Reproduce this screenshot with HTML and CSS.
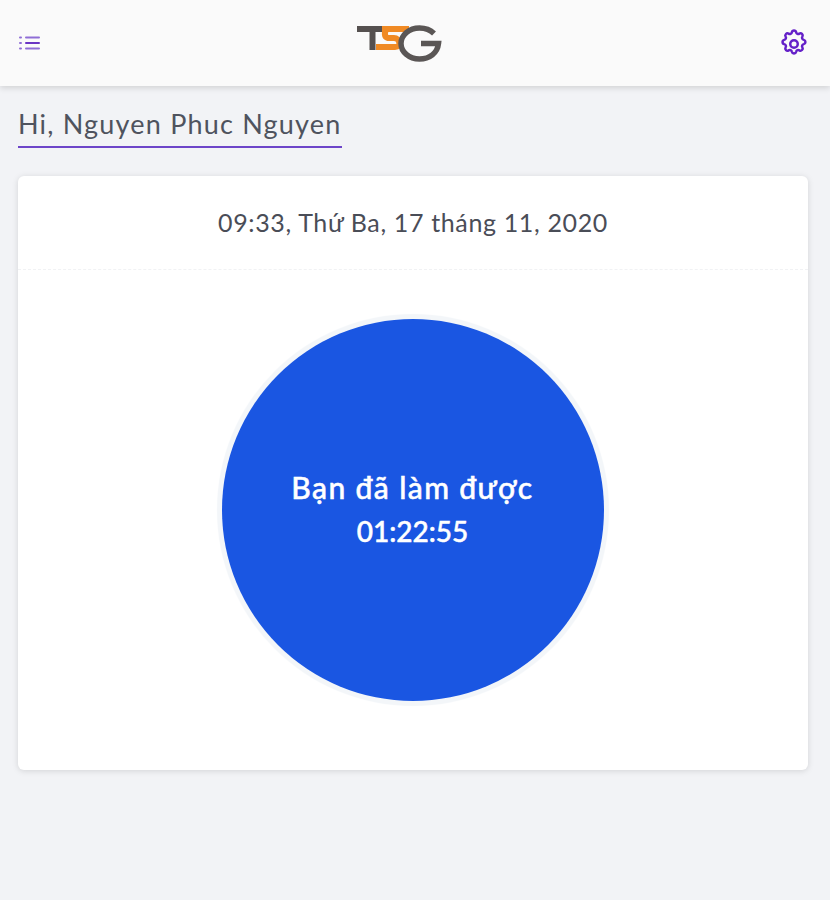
FILE: index.html
```html
<!DOCTYPE html>
<html lang="vi">
<head>
  <meta charset="UTF-8" />
  <meta name="viewport" content="width=device-width, initial-scale=1.0"/>
  <title>TSG</title>
  <link rel="stylesheet" href="styles.css">
</head>
<body>
  <header class="topbar">
    <svg class="menu-icon" viewBox="0 0 21 14" width="21" height="14" aria-hidden="true">
      <path d="M7 1.500h13M7 12.500h13" fill="none" stroke="#8f6ed6" stroke-width="2" stroke-linecap="round"/>
      <path d="M7 7h13" fill="none" stroke="#6a35c4" stroke-width="2" stroke-linecap="round"/>
      <path d="M1 1.500h1M1 7h1M1 12.500h1" fill="none" stroke="#8f6ed6" stroke-width="2" stroke-linecap="round"/>
    </svg>

    <svg class="logo" viewBox="0 0 86 40" width="86" height="40" role="img" aria-label="TSG">
      <path d="M25 5h27M30 5c-3 3-3 8 1 9h6c6 0 8 9 1 9H19" fill="none" stroke="#f08a24" stroke-width="6"/>
      <path d="M0 5h25M15.500 5v21" fill="none" stroke="#55504f" stroke-width="6"/>
      <path d="M77 9.500C73 5.500 68 4 62.500 4 52 4 44 11 44 19.500S52 35 62.500 35c10 0 18-6 19-15.500H64" fill="none" stroke="#5a5655" stroke-width="5.500"/>
    </svg>

    <svg class="gear-icon" viewBox="0 0 24 24" width="30" height="30" aria-hidden="true">
      <path d="M10.300 2.600c.4-1.800 3-1.800 3.400 0a1.700 1.700 0 0 0 2.600 1.100c1.500-.9 3.300.8 2.400 2.400a1.700 1.700 0 0 0 1.100 2.600c1.800.4 1.800 3 0 3.400a1.700 1.700 0 0 0-1.100 2.600c.9 1.500-.8 3.300-2.400 2.400a1.700 1.700 0 0 0-2.600 1.100c-.4 1.800-3 1.800-3.400 0a1.700 1.700 0 0 0-2.600-1.100c-1.500.9-3.300-.8-2.400-2.400a1.700 1.700 0 0 0-1.100-2.600c-1.800-.4-1.800-3 0-3.400a1.700 1.700 0 0 0 1.100-2.600c-.9-1.500.8-3.300 2.400-2.400a1.700 1.700 0 0 0 2.600-1.100z" fill="none" stroke="#6420c8" stroke-width="2"/>
      <circle cx="12" cy="12" r="3" fill="none" stroke="#6420c8" stroke-width="2"/>
    </svg>
  </header>

  <main class="content">
    <h1 class="greeting">Hi, Nguyen Phuc Nguyen</h1>

    <section class="card">
      <div class="card-date">09:33, Thứ Ba, 17 tháng 11, 2020</div>
      <div class="card-body">
        <div class="timer">
          <span class="timer-label">Bạn đã làm được</span>
          <span>01:22:55</span>
        </div>
      </div>
    </section>
  </main>
</body>
</html>
```

FILE: styles.css
```css
body {
  margin: 0;
  min-height: 100vh;
  background: #f2f3f6;
  font-family: "Lato", "Noto Sans", sans-serif;
  color: #4a4d57;
}

.topbar {
  height: 86px;
  box-sizing: border-box;
  padding: 0 21px 0 19px;
  display: flex;
  justify-content: space-between;
  align-items: center;
  background: #fafafa;
  box-shadow: 0 2px 6px rgba(0, 0, 0, 0.14);
}

.menu-icon {
  margin-bottom: 1px;
}

.logo {
  margin-right: 20px;
  margin-top: 2px;
  filter: blur(0.6px);
}

.gear-icon {
  margin-top: 2px;
}

.content {
  padding: 21px 22px 0 18px;
}

.greeting {
  display: inline-block;
  margin: 0;
  padding-bottom: 6px;
  font-size: 27px;
  line-height: 33px;
  font-weight: 400;
  letter-spacing: 1.2px;
  color: #4f535e;
  border-bottom: 2px solid #6d45c9;
}

.card {
  margin-top: 28px;
  height: 594px;
  display: flex;
  flex-direction: column;
  background: #fff;
  border-radius: 6px;
  box-shadow: 0 1px 6px rgba(0, 0, 0, 0.13);
}

.card-date {
  height: 94px;
  box-sizing: border-box;
  padding-top: 30px;
  text-align: center;
  font-size: 25px;
  line-height: 32px;
  letter-spacing: 0.65px;
  border-bottom: 1px dashed #f1f2f4;
}

.card-body {
  flex: 1;
  display: flex;
  justify-content: center;
  padding-top: 49px;
  padding-right: 1px;
}

.timer {
  width: 382px;
  height: 382px;
  box-sizing: border-box;
  padding-bottom: 2px;
  display: flex;
  flex-direction: column;
  justify-content: center;
  align-items: center;
  gap: 8px;
  border-radius: 50%;
  background: #1a56e2;
  box-shadow: 0 0 1px 5px #f3f6f9;
  color: #fff;
  font-size: 28px;
  line-height: 36px;
  font-weight: 500;
  -webkit-text-stroke: 0.5px #fff;
}

.timer-label {
  font-size: 30px;
  letter-spacing: 1.4px;
}
```
